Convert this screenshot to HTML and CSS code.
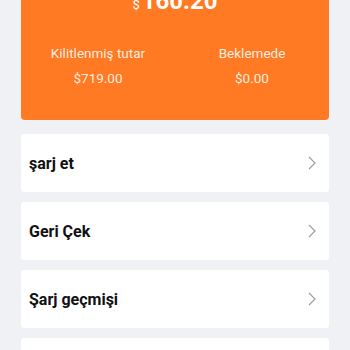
FILE: index.html
```html
<!DOCTYPE html>
<html lang="tr">
<head>
<meta charset="utf-8">
<link rel="stylesheet" href="styles.css">
</head>
<body>
<div class="page">
  <section class="balance">
    <div class="amount"><span class="cur">$</span>160.20</div>
    <div class="stats">
      <div class="stat">
        <div class="label">Kilitlenmiş tutar</div>
        <div class="value">$719.00</div>
      </div>
      <div class="stat">
        <div class="label">Beklemede</div>
        <div class="value">$0.00</div>
      </div>
    </div>
  </section>
  <ul class="menu">
    <li class="item"><span>şarj et</span><svg class="chev" viewBox="0 0 8 14" width="8" height="14"><path d="M1 1l6 6-6 6" fill="none" stroke="#9a9a9a" stroke-width="1.1"/></svg></li>
    <li class="item"><span>Geri Çek</span><svg class="chev" viewBox="0 0 8 14" width="8" height="14"><path d="M1 1l6 6-6 6" fill="none" stroke="#9a9a9a" stroke-width="1.1"/></svg></li>
    <li class="item"><span>Şarj geçmişi</span><svg class="chev" viewBox="0 0 8 14" width="8" height="14"><path d="M1 1l6 6-6 6" fill="none" stroke="#9a9a9a" stroke-width="1.1"/></svg></li>
    <li class="item"><span>Para çekme geçmişi</span><svg class="chev" viewBox="0 0 8 14" width="8" height="14"><path d="M1 1l6 6-6 6" fill="none" stroke="#9a9a9a" stroke-width="1.1"/></svg></li>
  </ul>
</div>
</body>
</html>
```
FILE: styles.css
```css
html, body {
  margin: 0;
  padding: 0;
  background: #f0f1f5;
  font-family: Roboto, "Liberation Sans", sans-serif;
}
.page {
  padding: 0 21px;
}
.balance {
  margin-top: -13px;
  background: #ff7a22;
  border-radius: 0 0 4px 4px;
  color: #fff;
  padding-bottom: 32px;
}
.amount {
  text-align: center;
  font-size: 24px;
  line-height: 28px;
  font-weight: 700;
}
.cur {
  font-size: 13px;
  font-weight: 400;
  margin-right: 2px;
}
.stats {
  display: grid;
  grid-template-columns: 1fr 1fr;
  margin-top: 24px;
}
.stat {
  text-align: center;
  color: rgba(255, 255, 255, 0.88);
  font-size: 13.5px;
  line-height: 20px;
}
.value {
  margin-top: 5px;
}
.menu {
  list-style: none;
  margin: 14px 0 0;
  padding: 0;
  display: flex;
  flex-direction: column;
  gap: 10px;
}
.item {
  height: 58px;
  background: #fff;
  border-radius: 3px;
  display: flex;
  align-items: center;
  justify-content: space-between;
  padding: 0 13px 0 8px;
  font-size: 16px;
  font-weight: 700;
  color: #111;
}
.chev {
  display: block;
}
```
